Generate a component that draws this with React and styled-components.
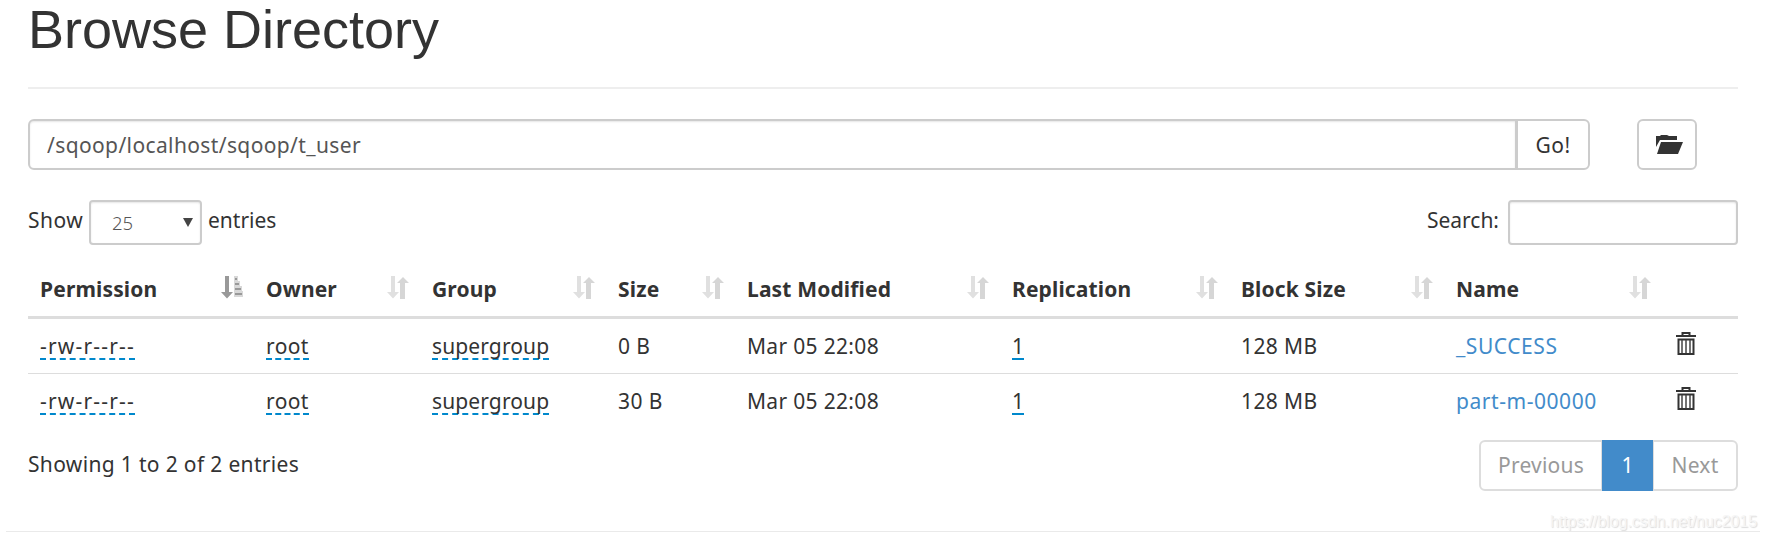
import React, { useState } from "react";
import styled, { createGlobalStyle, css } from "styled-components";

const GlobalStyle = createGlobalStyle`
  * {
    box-sizing: border-box;
  }
  body {
    margin: 0;
    background: #fff;
    color: #333;
    font-family: "Noto Sans", "Open Sans", sans-serif;
    font-size: 21px;
    line-height: 30px;
    overflow: hidden;
  }
`;

const Page = styled.div`
  position: relative;
  height: 540px;
`;

const Container = styled.div`
  width: 1710px;
  margin-left: 28px;
`;

const Title = styled.h1`
  margin: 0;
  height: 89px;
  border-bottom: 2px solid #eee;
  font-family: "Liberation Sans", Arial, sans-serif;
  font-size: 54px;
  font-weight: 400;
  line-height: 58px;
`;

const Toolbar = styled.div`
  display: flex;
  height: 51px;
  margin-top: 30px;
`;

const field = css`
  border: 2px solid #ccc;
  background: #fff;
  color: #555;
  font-family: inherit;
  box-shadow: inset 0 1px 2px rgba(0, 0, 0, 0.1);
  outline: none;
`;

const PathInput = styled.input`
  ${field}
  width: 1489px;
  padding: 0 17px;
  border-radius: 6px 0 0 6px;
  font-size: 21px;
  letter-spacing: 0.38px;
`;

const Button = styled.button`
  width: ${(props) => props.$width}px;
  padding: 0;
  border: 2px solid #ccc;
  border-radius: 6px;
  background: #fff;
  color: #333;
  font: inherit;
`;

const GoButton = styled(Button)`
  margin-left: -1px;
  border-radius: 0 6px 6px 0;
  letter-spacing: 0.5px;
`;

const FolderButton = styled(Button)`
  display: flex;
  align-items: center;
  justify-content: center;
  margin-left: 47px;
  padding-left: 4px;
`;

const Controls = styled.div`
  display: flex;
  justify-content: space-between;
  height: 45px;
  margin-top: 30px;
`;

const Label = styled.label`
  display: flex;
  gap: ${(props) => props.$gap}px;
  line-height: 40px;
`;

const Select = styled.span`
  ${field}
  display: flex;
  align-items: center;
  justify-content: space-between;
  width: 113px;
  height: 45px;
  padding: 0 7px 0 21px;
  border-radius: 4px;
  font-size: 18.5px;
  font-weight: 300;
`;

const SearchInput = styled.input`
  ${field}
  width: 230px;
  height: 45px;
  padding: 0 12px;
  border-radius: 4px;
  font-size: 18px;
`;

const Table = styled.table`
  width: 1710px;
  margin-top: 17px;
  border-collapse: separate;
  border-spacing: 0;
  table-layout: fixed;
`;

const Th = styled.th`
  width: ${(props) => props.$width}px;
  height: 57px;
  padding: 0 11px 3px 12px;
  border-bottom: 3px solid #ddd;
  text-align: left;
  font-weight: 700;
  letter-spacing: 0.15px;
  white-space: nowrap;
`;

const HeadCell = styled.div`
  display: flex;
  align-items: flex-start;
  justify-content: space-between;
  padding-top: 2px;

  svg {
    margin-top: 2px;
  }
`;

const Td = styled.td`
  height: ${(props) => (props.$last ? 54 : 55)}px;
  padding: 0 0 0 12px;
  border-bottom: ${(props) => (props.$last ? "0" : "1px solid #ddd")};
  letter-spacing: ${(props) => props.$spacing || 0.4}px;
  white-space: nowrap;
  vertical-align: middle;
`;

const Editable = styled.span`
  display: inline-block;
  height: 29px;
  line-height: 30px;
  border-bottom: 2px dashed #08c;
`;

const FileLink = styled.a`
  color: #428bca;
  text-decoration: none;
`;

const Footer = styled.div`
  display: flex;
  justify-content: space-between;
  margin-top: 12px;
  line-height: 48px;
`;

const Info = styled.span`
  letter-spacing: 0.34px;
`;

const Pagination = styled.div`
  display: flex;
  height: 51px;
`;

const PageItem = styled.span`
  width: ${(props) => props.$width}px;
  border: 2px solid #ddd;
  color: #999;
  letter-spacing: 0.2px;
  text-align: center;
  line-height: 46px;

  &:first-child {
    border-right-width: 1px;
    border-radius: 6px 0 0 6px;
  }
  &:last-child {
    border-left-width: 1px;
    border-radius: 0 6px 6px 0;
  }
  ${(props) =>
    props.$active &&
    css`
      border-color: #428bca;
      background: #428bca;
      color: #fff;
    `}
`;

const BottomLine = styled.hr`
  width: 1754px;
  height: 1px;
  margin: 40px 0 0 6px;
  border: 0;
  background: #eaeaea;
`;

const Watermark = styled.div`
  position: absolute;
  right: 10px;
  bottom: 8px;
  color: #f6f6f6;
  font-family: "Liberation Sans", Arial, sans-serif;
  font-size: 16px;
  letter-spacing: -0.07px;
  line-height: 20px;
  text-shadow: 1px 1px 1px #dcdcdc;
`;

const columns = [
  { title: "Permission", width: 226, sort: "asc" },
  { title: "Owner", width: 166, sort: "both" },
  { title: "Group", width: 186, sort: "both" },
  { title: "Size", width: 129, sort: "both" },
  { title: "Last Modified", width: 265, sort: "both" },
  { title: "Replication", width: 229, sort: "both" },
  { title: "Block Size", width: 215, sort: "both" },
  { title: "Name", width: 218, sort: "both" },
  { title: "", width: 76 },
];

const files = [
  { name: "_SUCCESS", size: "0 B" },
  { name: "part-m-00000", size: "30 B" },
];

const SortBoth = () => (
  <svg width="22" height="23" viewBox="0 0 22 23">
    <path d="M4 0h4v16h4l-6 6.500L0 16h4z" fill="#e0e0e0" />
    <path d="M16 1l6 6h-4v16h-5V7h-3z" fill="#d6d6d6" />
  </svg>
);

const SortAsc = () => (
  <svg width="22" height="23" viewBox="0 0 22 23">
    <path d="M4 0h4v16h4l-6 6.500L0 16h4z" fill="#999" />
    <path
      d="M13 0h4v5h-4zM13 5h6v6h-6zM13 10h8v6h-8zM13 15h9v6h-9z"
      fill="#d8d8d8"
    />
    <path d="M14 2h2v2h-2zM14 7h4v2h-4zM14 12h6v2h-6zM14 17h7v2h-7z" fill="#999" />
  </svg>
);

const FolderIcon = () => (
  <svg width="27" height="19" viewBox="0 0 27 19">
    <path d="M0 12V1h4l1-1h6l2 1h8v4H4z" fill="#333" />
    <path d="M5 7h22l-5 12H1z" fill="#333" />
  </svg>
);

const TrashIcon = () => (
  <svg width="20" height="23" viewBox="0 0 20 23">
    <path
      d="M6.500 4V1h7v3M0 4h20M2.500 7.500h15V22h-15z"
      fill="none"
      stroke="#333"
      strokeWidth="2"
    />
    <path d="M6 8v13M10 8v13M14 8v13" stroke="#444" strokeWidth="1.500" />
  </svg>
);

const TrashButton = styled.span`
  display: flex;
  padding: 0 0 5px 2px;
`;

const ShowText = styled.span`
  width: 55px;
  letter-spacing: 0.5px;
`;

const App = () => {
  const [path, setPath] = useState("/sqoop/localhost/sqoop/t_user");
  const [search, setSearch] = useState("");

  return (
    <Page>
      <GlobalStyle />
      <Container>
        <Title>Browse Directory</Title>
        <Toolbar>
          <PathInput value={path} onChange={(e) => setPath(e.target.value)} />
          <GoButton $width={74}>Go!</GoButton>
          <FolderButton $width={60}>
            <FolderIcon />
          </FolderButton>
        </Toolbar>
        <Controls>
          <Label $gap={6}>
            <ShowText>Show</ShowText>
            <Select>
              25
              <svg width="10" height="9" viewBox="0 0 10 9">
                <path d="M0 0h10L5 9z" fill="#444" />
              </svg>
            </Select>
            entries
          </Label>
          <Label $gap={9}>
            Search:
            <SearchInput
              value={search}
              onChange={(e) => setSearch(e.target.value)}
            />
          </Label>
        </Controls>
        <Table>
          <thead>
            <tr>
              {columns.map((col) => (
                <Th key={col.title} $width={col.width}>
                  <HeadCell>
                    {col.title}
                    {col.sort === "asc" && <SortAsc />}
                    {col.sort === "both" && <SortBoth />}
                  </HeadCell>
                </Th>
              ))}
            </tr>
          </thead>
          <tbody>
            {files.map((file, index) => {
              const last = index === files.length - 1;
              return (
                <tr key={file.name}>
                  <Td $last={last} $spacing={1.18}>
                    <Editable>-rw-r--r--</Editable>
                  </Td>
                  <Td $last={last}>
                    <Editable>root</Editable>
                  </Td>
                  <Td $last={last} $spacing={0.12}>
                    <Editable>supergroup</Editable>
                  </Td>
                  <Td $last={last}>{file.size}</Td>
                  <Td $last={last} $spacing={0.32}>
                    Mar 05 22:08
                  </Td>
                  <Td $last={last}>
                    <Editable>1</Editable>
                  </Td>
                  <Td $last={last}>128 MB</Td>
                  <Td $last={last} $spacing={0.55}>
                    <FileLink>{file.name}</FileLink>
                  </Td>
                  <Td $last={last}>
                    <TrashButton>
                      <TrashIcon />
                    </TrashButton>
                  </Td>
                </tr>
              );
            })}
          </tbody>
        </Table>
        <Footer>
          <Info>Showing 1 to 2 of 2 entries</Info>
          <Pagination>
            <PageItem $width={123}>Previous</PageItem>
            <PageItem $width={51} $active>
              1
            </PageItem>
            <PageItem $width={85}>Next</PageItem>
          </Pagination>
        </Footer>
      </Container>
      <BottomLine />
      <Watermark>https://blog.csdn.net/nuc2015</Watermark>
    </Page>
  );
};

export default App;
